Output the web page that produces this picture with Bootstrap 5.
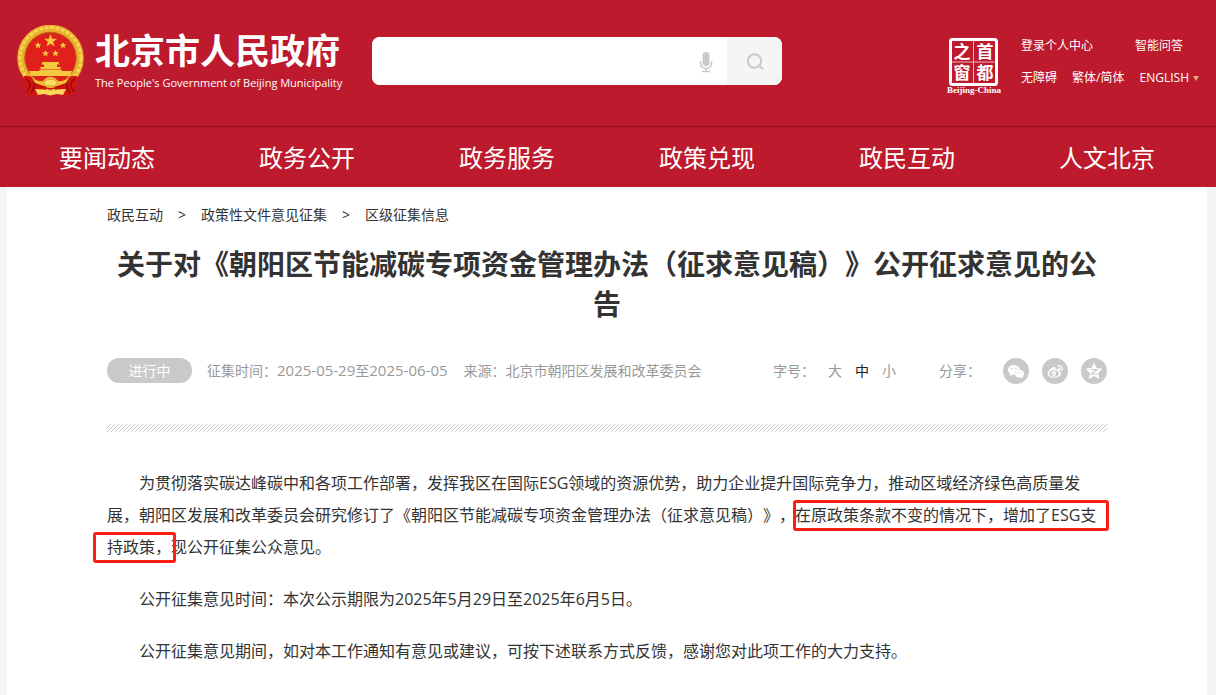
<!DOCTYPE html>
<html lang="zh-CN">
<head>
<meta charset="utf-8">
<meta name="viewport" content="width=device-width, initial-scale=1">
<title>北京市人民政府 - 区级征集信息</title>
<link href="https://cdn.jsdelivr.net/npm/bootstrap@5.3.0/dist/css/bootstrap.min.css" rel="stylesheet">
<style>
  :root { --gov-red: #bd1a2d; --gov-grey: #c9c9c9; }
  body { font-family: "Open Sans", "Noto Sans CJK SC", sans-serif; font-size: 14px; color: #333; background: #f5f5f5; text-spacing-trim: space-all; }
  a { text-decoration: none; color: inherit; }
  .shell { margin: 0 9px 0 7px; }
  .site-head { background: var(--gov-red); color: #fff; }
  .head-top { height: 126px; padding-left: 10px; }
  .brand-block { width: 355px; padding-top: 25px; gap: 11px; }
  .brand-name { font-size: 35px; line-height: 46px; font-weight: 700; margin-top: 3px; white-space: nowrap; }
  .brand-sub { font-size: 11px; line-height: 18px; white-space: nowrap; }
  .search-box { width: 410px; height: 48px; margin-top: 37px; border-radius: 8px; overflow: hidden; background: #fff; }
  .search-box input { border: 0; box-shadow: none; min-width: 0; }
  .search-box button { border: 0; padding: 0; flex-shrink: 0; }
  .btn-voice { width: 42px; background: #fff; }
  .btn-find { width: 55px; background: #f5f5f5; }
  .seal { width: 56px; margin-top: 36px; margin-right: 19px; }
  .quick { font-size: 12px; line-height: 18px; margin-top: 37px; width: 178px; margin-right: 8px; }
  .quick .second { margin-top: 14px; }
  .arrow-down { border: 3px solid transparent; border-top: 5px solid #dcae73; border-bottom: 0; }
  .main-nav { border-top: 1px solid #8f1422; }
  .main-nav a { font-size: 24px; line-height: 60px; color: #fff; padding: 1px 0 0; height: 60px; }
  .page { background: #fff; padding: 0 100px; min-height: 508px; }
  .crumbs { padding-top: 18px; line-height: 20px; gap: 15px; }
  .headline { font-size: 28px; line-height: 40px; font-weight: 700; margin: 19px 0 0; text-align: center; }
  .meta { margin-top: 33px; color: #999; line-height: 26px; }
  .dates { font-size: 15px; }
  .state { width: 85px; height: 25px; line-height: 25px; border-radius: 12px; background: var(--gov-grey); color: #fff; text-align: center; margin-right: 15px; }
  .source { margin-left: 16px; }
  .sizes { gap: 13px; margin-right: 43px; }
  .sizes button { border: 0; background: none; padding: 0; color: #999; }
  .sizes button.current { color: #222; }
  .share-label { margin-right: 22px; }
  .share { gap: 13px; }
  .hatch { display: block; width: 100%; height: 8px; margin-top: 40px; }
  .article { font-size: 16px; line-height: 32px; margin-top: 35px; }
  .article p { text-indent: 32px; margin: 0 0 20px; }
  .boxed { position: relative; text-indent: 0; }
  .boxed::after { content: ""; position: absolute; inset: -4px -13px -5px -2px; border: 3px solid #ff1e14; border-radius: 3px; }
  .boxed.tail::after { inset: -4px -5px -5px -14px; }
</style>
</head>
<body>
<header class="site-head">
  <div class="shell">
    <div class="head-top d-flex align-items-start">
      <a href="#" class="brand-block d-flex flex-shrink-0">
        <svg width="67" height="72" viewBox="0 0 67 72" class="flex-shrink-0" aria-hidden="true">
          <circle cx="33.500" cy="33" r="29.500" fill="none" stroke="#e9b02c" stroke-width="7.500"/>
          <circle cx="33.500" cy="33" r="30.500" fill="none" stroke="#f8d455" stroke-width="3" stroke-dasharray="4 1.500"/>
          <circle cx="33.500" cy="33" r="25.700" fill="#e0201a" stroke="#b8661a"/>
          <g fill="#f6c83e">
            <path d="M33.500 9l1.600 4.700 5 .1-4 3 1.500 4.700-4.100-2.800-4.100 2.800 1.500-4.700-4-3 5-.1z"/>
            <path d="M21 17l1 2.200 2.300.2-1.800 1.500.7 2.400-2.200-1.300-2.200 1.300.7-2.400-1.800-1.500 2.300-.2zM46 17l1 2.200 2.300.2-1.800 1.500.7 2.400-2.200-1.300-2.200 1.300.7-2.400-1.800-1.500 2.300-.2zM28.500 25l1 2.200 2.300.2-1.800 1.500.7 2.400-2.200-1.300-2.200 1.300.7-2.400-1.800-1.500 2.300-.2zM38.500 25l1 2.200 2.300.2-1.800 1.500.7 2.400-2.200-1.300-2.200 1.300.7-2.400-1.800-1.500 2.300-.2z"/>
            <path d="M25.500 37h16l1 2.500h-18zM27 39.500h13V42H27zM23.500 42h20v2h-20zM22.500 44.500h22V48h-22zM12 46h43l-2 5H14z"/>
          </g>
          <path d="M7 51q6-1 11 3l11 4v8l-12 5-5-2-4-1 1-6-3-5zM60 51q-6-1-11 3l-11 4v8l12 5 5-2 4-1-1-6 3-5z" fill="#d2150f"/>
          <path d="M9 54q5 3 4 8l-3 5M17 56q2 5-3 12M58 54q-5 3-4 8l3 5M50 56q-2 5 3 12" fill="none" stroke="#940c12" stroke-width="1.500"/>
          <path d="M14 51q5 6 12 5l3-3 4.500-1.500L38 53l3 3q7 1 12-5l-4 7-9 3-6.500 2-6.500-2-9-3z" fill="#f4c038"/>
          <path d="M18 64l9 .5 6.500 1.500 6.500-1.500 9-.5-3 6-6-1-6.500 1.500-6.500-1.500-6 1z" fill="#fbd659"/>
          <path d="M26 58q3-4 7.500-4T41 58l-4 3h-7z" fill="#ffdc66" stroke="#d68b20" stroke-width=".8"/>
          <path d="M20 61l13.500 3L47 61" fill="none" stroke="#c3130f" stroke-width="1.500"/>
        </svg>
        <span class="d-block">
          <span class="brand-name d-block">北京市人民政府</span>
          <span class="brand-sub d-block">The People's Government of Beijing Municipality</span>
        </span>
      </a>
      <form class="search-box d-flex" role="search">
        <input class="form-control rounded-0" type="text" aria-label="搜索">
        <button type="button" class="btn-voice" aria-label="语音输入">
          <svg width="14" height="22" viewBox="0 0 14 22" fill="none" stroke="#c9c9c9" stroke-width="1.500"><rect x="3.500" y="1" width="7" height="14" rx="3.500" fill="#c9c9c9" stroke="none"/><path d="M1.500 10v2.500a5.500 5 0 0 0 11 0V10M7 17.500V20M3 20.500h8"/></svg>
        </button>
        <button type="submit" class="btn-find" aria-label="查找">
          <svg width="20" height="20" viewBox="0 0 20 20" fill="none" stroke="#c9c9c9" stroke-width="2"><circle cx="9.500" cy="9" r="6.700"/><path d="M14 13.500l4 3.500"/></svg>
        </button>
      </form>
      <a href="#" class="seal ms-auto flex-shrink-0" aria-label="首都之窗">
        <svg width="56" height="60" viewBox="0 0 56 60" fill="#fff">
          <rect x="4.500" y="3.500" width="46" height="45" rx="2" fill="none" stroke="#fff" stroke-width="3"/>
          <path d="M27.500 4v44M5 26h45" stroke="#fff" stroke-width="1" opacity=".7"/>
          <g font-family="'Noto Sans CJK SC', sans-serif" font-size="17" font-weight="700" text-anchor="middle">
            <text x="16" y="22">之</text><text x="39" y="22">首</text><text x="16" y="43">窗</text><text x="39" y="43">都</text>
          </g>
          <text x="28" y="57" font-family="'Liberation Serif', serif" font-size="9" font-weight="700" text-anchor="middle">Beijing-China</text>
        </svg>
      </a>
      <div class="quick flex-shrink-0">
        <div class="d-flex justify-content-between pe-3"><a href="#">登录个人中心</a><a href="#">智能问答</a></div>
        <div class="second d-flex justify-content-between align-items-center">
          <a href="#">无障碍</a><a href="#">繁体/简体</a>
          <a href="#" class="d-flex align-items-center gap-1">ENGLISH <span class="arrow-down"></span></a>
        </div>
      </div>
    </div>
  </div>
  <nav class="main-nav" aria-label="主导航">
    <div class="shell nav nav-fill flex-nowrap row-cols-6 text-nowrap">
      <a class="nav-link col" href="#">要闻动态</a>
      <a class="nav-link col" href="#">政务公开</a>
      <a class="nav-link col" href="#">政务服务</a>
      <a class="nav-link col" href="#">政策兑现</a>
      <a class="nav-link col" href="#">政民互动</a>
      <a class="nav-link col" href="#">人文北京</a>
    </div>
  </nav>
</header>
<main class="shell page">
  <nav class="crumbs d-flex" aria-label="面包屑">
    <a href="#">政民互动</a><span>&gt;</span><a href="#">政策性文件意见征集</a><span>&gt;</span><a href="#">区级征集信息</a>
  </nav>
  <h1 class="headline">关于对《朝阳区节能减碳专项资金管理办法（征求意见稿）》公开征求意见的公告</h1>
  <div class="meta d-flex align-items-center text-nowrap">
    <span class="state">进行中</span>
    <span>征集时间：<span class="dates">2025-05-29</span>至<span class="dates">2025-06-05</span></span>
    <span class="source">来源：北京市朝阳区发展和改革委员会</span>
    <div class="sizes d-flex ms-auto">
      <span>字号：</span>
      <button type="button">大</button><button type="button" class="current">中</button><button type="button">小</button>
    </div>
    <span class="share-label">分享：</span>
    <div class="share d-flex">
      <a href="#" class="d-flex" aria-label="微信"><svg width="26" height="26" viewBox="0 0 26 26"><circle cx="13" cy="13" r="13" fill="#c9c9c9"/><path d="M11 7c-3.400 0-6 2.100-6 4.900 0 1.600.9 2.900 2.200 3.800L6.600 18l2.500-1.300c.8.200 1.600.2 2.400.1 0-3.500 2.400-5.400 5.400-5.300C16.400 8.800 14 7 11 7z" fill="#fff"/><path d="M21 15.700c0-2.300-2.100-3.900-4.500-3.900S12 13.400 12 15.700s2.100 3.900 4.500 3.900c.5 0 1-.1 1.500-.2l2 1-.5-1.700c.9-.7 1.500-1.700 1.500-3z" fill="#fff"/><g fill="#c9c9c9"><circle cx="9" cy="10.500" r=".8"/><circle cx="13" cy="10.500" r=".8"/><circle cx="15" cy="14.700" r=".6"/><circle cx="18" cy="14.700" r=".6"/></g></svg></a>
      <a href="#" class="d-flex" aria-label="微博"><svg width="26" height="26" viewBox="0 0 26 26"><circle cx="13" cy="13" r="13" fill="#c9c9c9"/><path d="M11.500 9c-2.400.6-5.800 4-5.800 6.500 0 2.700 3.200 4.300 6.500 4.300 4.100 0 7-2.200 7-4.500 0-1.400-1.100-2.100-2.100-2.400.6-1.700-.6-2.600-3.700-1.400.6-1.700-.1-2.900-1.900-2.500z" fill="#fff"/><ellipse cx="12" cy="15.500" rx="4.700" ry="3.200" fill="#c9c9c9"/><circle cx="11.700" cy="15.600" r="2.300" fill="#fff"/><circle cx="11" cy="16" r=".9" fill="#c9c9c9"/><path d="M15.800 7.600c3-.6 5.300 1.700 4.500 4.900M16.200 10c1.300-.2 2.200.8 1.900 2" fill="none" stroke="#fff" stroke-width="1.200" stroke-linecap="round"/></svg></a>
      <a href="#" class="d-flex" aria-label="QQ空间"><svg width="26" height="26" viewBox="0 0 26 26"><circle cx="13" cy="13" r="13" fill="#c9c9c9"/><path d="M13 4.500l2.500 5.500 6 .7-4.400 4.200 1.100 6L13 18l-5.200 2.900 1.100-6-4.400-4.200 6-.7z" fill="#fff"/><path d="M10 11.500h6l-6 4.500h6.500" fill="none" stroke="#c9c9c9" stroke-width="1.200"/></svg></a>
    </div>
  </div>
  <svg class="hatch" aria-hidden="true">
    <defs><pattern id="slashes" width="4" height="8" patternUnits="userSpaceOnUse"><path d="M-8 8L0 0M-4 8L4 0M0 8L8 0M4 8L12 0" stroke="#c8c8c8" stroke-width="1"/></pattern></defs>
    <rect width="100%" height="8" fill="url(#slashes)"/>
  </svg>
  <article class="article">
    <p>为贯彻落实碳达峰碳中和各项工作部署，发挥我区在国际ESG领域的资源优势，助力企业提升国际竞争力，推动区域经济绿色高质量发展，朝阳区发展和改革委员会研究修订了《朝阳区节能减碳专项资金管理办法（征求意见稿）》，<span class="boxed">在原政策条款不变的情况下，增加了ESG支</span><span class="boxed tail">持政策，</span>现公开征集公众意见。</p>
    <p>公开征集意见时间：本次公示期限为2025年5月29日至2025年6月5日。</p>
    <p class="mb-0">公开征集意见期间，如对本工作通知有意见或建议，可按下述联系方式反馈，感谢您对此项工作的大力支持。</p>
  </article>
</main>
<script src="https://cdn.jsdelivr.net/npm/bootstrap@5.3.0/dist/js/bootstrap.bundle.min.js"></script>
</body>
</html>
